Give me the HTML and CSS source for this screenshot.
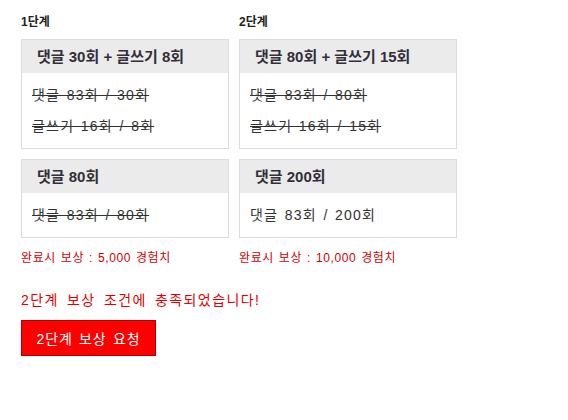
FILE: index.html
```html
<!DOCTYPE html>
<html lang="ko">
<head>
<meta charset="utf-8">
<link rel="stylesheet" href="styles.css">
</head>
<body>
<div class="stages">
  <div class="stage stage-1">
    <div class="label">1단계</div>
    <div class="box">
      <div class="head">댓글 30회 + 글쓰기 8회</div>
      <div class="body">
        <p class="done">댓글 83회 / 30회</p>
        <p class="done">글쓰기 16회 / 8회</p>
      </div>
    </div>
    <div class="box">
      <div class="head">댓글 80회</div>
      <div class="body">
        <p class="done">댓글 83회 / 80회</p>
      </div>
    </div>
    <div class="reward">완료시 보상 : 5,000 경험치</div>
  </div>
  <div class="stage stage-2">
    <div class="label">2단계</div>
    <div class="box">
      <div class="head">댓글 80회 + 글쓰기 15회</div>
      <div class="body">
        <p class="done">댓글 83회 / 80회</p>
        <p class="done">글쓰기 16회 / 15회</p>
      </div>
    </div>
    <div class="box">
      <div class="head">댓글 200회</div>
      <div class="body">
        <p>댓글 83회 / 200회</p>
      </div>
    </div>
    <div class="reward">완료시 보상 : 10,000 경험치</div>
  </div>
</div>
<p class="message">2단계 보상 조건에 충족되었습니다!</p>
<button class="request">2단계 보상 요청</button>
</body>
</html>
```
FILE: styles.css
```css
html, body {
  margin: 0;
  background: #fff;
}
body {
  padding: 14px 21px;
  font-family: "Liberation Sans", "Noto Sans CJK KR", sans-serif;
  color: #333;
}
.stages {
  display: flex;
  gap: 10px;
  align-items: flex-start;
}
.stage-1 { width: 208px; }
.stage-2 { width: 218px; }
.label {
  font-size: 12px;
  font-weight: bold;
  line-height: 16px;
  color: #222;
  margin-bottom: 9px;
}
.box {
  border: 1px solid #dcdcdc;
  margin-bottom: 10px;
}
.box:last-of-type { margin-bottom: 0; }
.head {
  background: #ebebeb;
  height: 33px;
  line-height: 33px;
  padding: 0 15px;
  font-size: 15px;
  font-weight: bold;
  color: #332f3a;
  white-space: nowrap;
}
.body {
  padding: 7px 10px 6px;
}
.body p {
  margin: 0;
  font-size: 14px;
  line-height: 31px;
  color: #333;
  letter-spacing: 1.2px;
  word-spacing: 1.5px;
  white-space: nowrap;
}
.body p.done {
  text-decoration: line-through;
}
.reward {
  margin-top: 12px;
  font-size: 12px;
  line-height: 16px;
  color: #d00000;
  letter-spacing: 0.6px;
  word-spacing: 1px;
  white-space: nowrap;
}
.message {
  margin: 24px 0 10px;
  font-size: 14px;
  line-height: 20px;
  color: #e00000;
  letter-spacing: 1.4px;
  word-spacing: 3px;
}
.request {
  display: block;
  width: 135px;
  height: 36px;
  margin: 0;
  padding: 0;
  background: #ff0000;
  border: 1px solid #b00000;
  color: #fff;
  font-family: "Liberation Sans", "Noto Sans CJK KR", sans-serif;
  font-size: 14px;
  letter-spacing: 0.9px;
  word-spacing: 1.5px;
}
```
